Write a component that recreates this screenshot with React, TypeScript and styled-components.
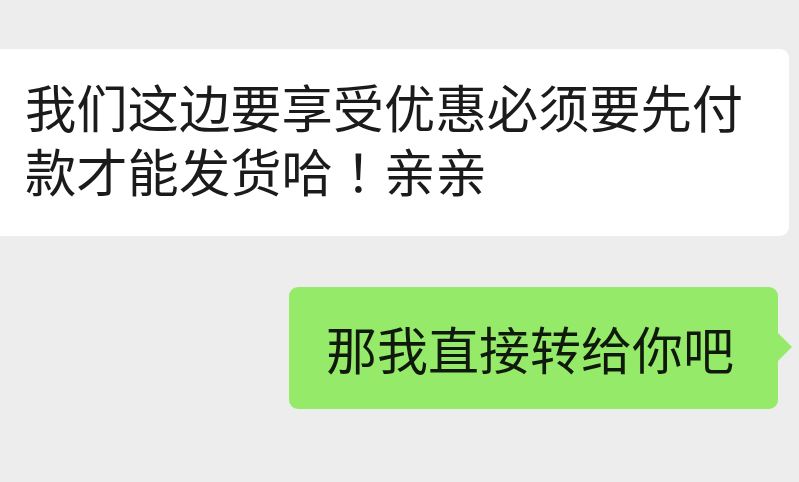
import React from "react";
import styled, { createGlobalStyle } from "styled-components";

const Global = createGlobalStyle`
  html, body { margin: 0; padding: 0; background: #ededed; }
  body { font-family: "Noto Sans CJK SC", "Noto Sans", sans-serif; }
`;

const Chat = styled.div`
  width: 799px;
  height: 482px;
  overflow: hidden;
  background: #ededed;
  display: flex;
  flex-direction: column;
  padding-top: 49px;
  box-sizing: border-box;
`;

const IncomingBubble = styled.div`
  margin-left: -12px;
  width: 801px;
  box-sizing: border-box;
  background: #ffffff;
  border-radius: 9px;
  padding: 25px 0 0 37px;
  height: 187px;
  font-size: 51.3px;
  line-height: 64px;
  color: #1b1b1b;
  white-space: nowrap;
`;

const Punct = styled.span`
  font-family: "Noto Sans CJK TC", "Noto Sans CJK SC", sans-serif;
`;

const OutgoingRow = styled.div`
  display: flex;
  justify-content: flex-end;
  margin-top: 51px;
  padding-right: 21px;
`;

const OutgoingBubble = styled.div`
  position: relative;
  background: #95eb69;
  border-radius: 9px;
  height: 122px;
  width: 489px;
  box-sizing: border-box;
  padding: 0 0 0 37px;
  display: flex;
  align-items: center;
  font-size: 51px;
  line-height: 64px;
  color: #101a0c;
  white-space: nowrap;

  &::after {
    content: "";
    position: absolute;
    right: -14px;
    top: 45px;
    width: 0;
    height: 0;
    border-top: 15px solid transparent;
    border-bottom: 15px solid transparent;
    border-left: 15px solid #95eb69;
  }
`;

export default function App() {
  return (
    <>
      <Global />
      <Chat>
        <IncomingBubble>
          我们这边要享受优惠必须要先付
          <br />
          款才能发货哈<Punct>！</Punct>亲亲
        </IncomingBubble>
        <OutgoingRow>
          <OutgoingBubble>那我直接转给你吧</OutgoingBubble>
        </OutgoingRow>
      </Chat>
    </>
  );
}
